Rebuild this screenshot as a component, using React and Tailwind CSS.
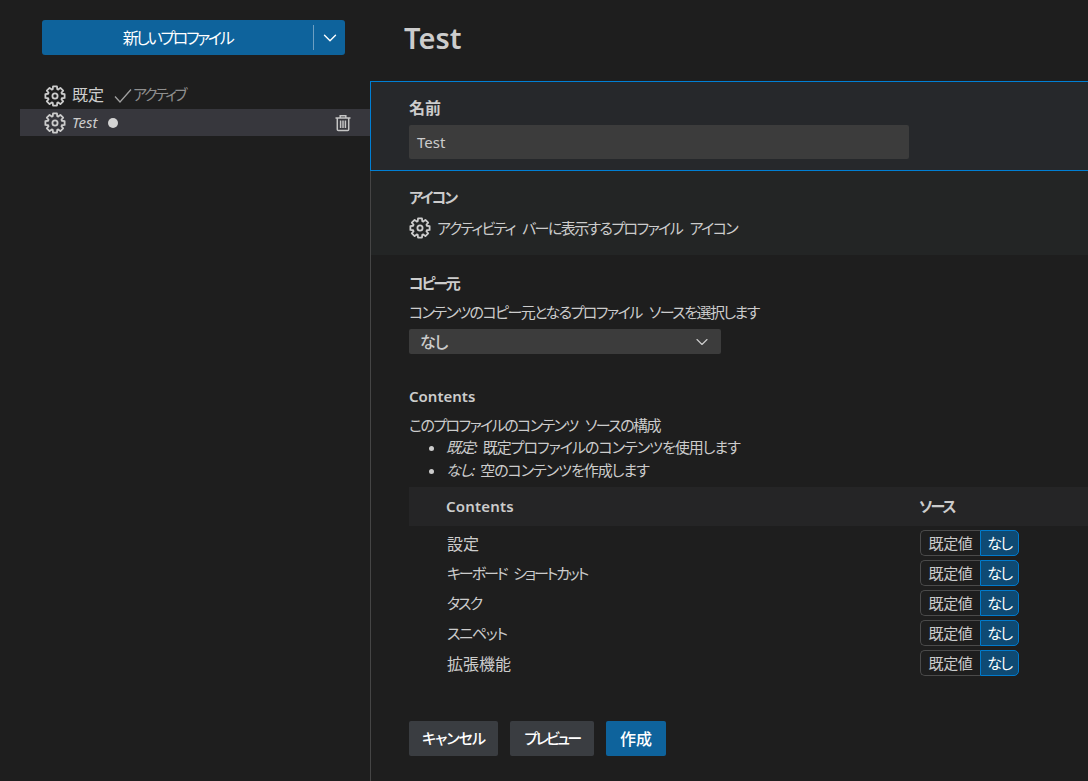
import { ChevronDown } from 'lucide-react';

const rows = [
  { label: '設定', cls: 'pt-[2px] text-[16px]' },
  { label: 'キーボード ショートカット', cls: 'pt-[1px] text-[15px] tracking-[-2.1px] [word-spacing:5px]' },
  { label: 'タスク', cls: 'pt-[1px] text-[15px] tracking-[-2px]' },
  { label: 'スニペット', cls: 'pt-[1px] text-[15px] tracking-[-1.2px]' },
  { label: '拡張機能', cls: 'pt-[2px] text-[16px]' },
];

// 8 toothed gear outline, same shape as the codicon one
const gearPath = (() => {
  const pts = [];
  for (let i = 0; i < 8; i++) {
    const a = (i * Math.PI) / 4 - Math.PI / 2;
    [[7.2, -0.32], [9.8, -0.2], [9.8, 0.2], [7.2, 0.32]].forEach(([r, d]) => {
      pts.push(`${(11 + r * Math.cos(a + d)).toFixed(2)} ${(11 + r * Math.sin(a + d)).toFixed(2)}`);
    });
  }
  return `M${pts.join('L')}Z`;
})();

function Gear({ className }) {
  return (
    <svg width="22" height="22" viewBox="0 0 22 22" fill="none" stroke="#cccccc" strokeWidth="1.8" strokeLinejoin="round" className={className}>
      <path d={gearPath} />
      <circle cx="11" cy="11" r="2.6" />
    </svg>
  );
}

function Trash() {
  return (
    <svg width="18" height="18" viewBox="0 0 18 18" fill="none" stroke="#c5c5c5" strokeWidth="1.5" className="mr-[18px]">
      <path d="M1.5 4h15M6.2 4V1.8h5.6V4" />
      <path d="M3.3 4v11.5c0 .6.5 1 1 1h9.4c.5 0 1-.4 1-1V4" />
      <path d="M6.6 6.5v7.5M9 6.5v7.5M11.4 6.5v7.5" />
    </svg>
  );
}

function Sidebar() {
  return (
    <div className="w-[370px] shrink-0 pl-5 pt-5">
      <div className="ml-[22px] flex h-[35px] w-[303px] items-center rounded-[3px] bg-[#0e639c] text-white">
        <div className="flex-1 text-center text-[16px] tracking-[-2.3px]">新しいプロファイル</div>
        <div className="h-[25px] w-px bg-[#6d9fc2]" />
        <div className="flex w-[31px] justify-center">
          <ChevronDown size={22} strokeWidth={1.5} />
        </div>
      </div>
      <div className="mt-[27px]">
        <div className="flex h-[27px] items-center pl-6 text-[#cccccc]">
          <Gear />
          <span className="ml-[6px] pb-[2px] text-[16px]">既定</span>
          <svg width="20" height="20" viewBox="0 0 20 20" fill="none" stroke="#a0a0a0" strokeWidth="1.3" className="ml-[9px]">
            <path d="M2 10.5 7 16 18 3.5" />
          </svg>
          <span className="pb-[2px] text-[15px] tracking-[-2.4px] text-[#8f8f8f]">アクティブ</span>
        </div>
        <div className="flex h-[27px] items-center bg-[#37373d] pl-6 text-[#cccccc]">
          <Gear />
          <span className="ml-[6px] text-[15px] italic">Test</span>
          <span className="ml-[11px] h-[10px] w-[10px] rounded-full bg-[#d4d4d4]" />
          <div className="ml-auto flex">
            <Trash />
          </div>
        </div>
      </div>
    </div>
  );
}

function SourceToggle() {
  return (
    <div className="flex h-[26px] w-[99px] text-[15px] leading-none">
      <div className="flex w-[60px] items-center justify-center rounded-l-[5px] border border-r-0 border-[#4a4a4a] tracking-[-0.3px] text-[#cccccc]">
        既定値
      </div>
      <div className="flex flex-1 items-center justify-center rounded-r-[5px] border border-[#007acc] bg-[#0f4a73] tracking-[-1.5px] text-white">
        なし
      </div>
    </div>
  );
}

export default function App() {
  return (
    <div
      className="flex h-[781px] w-[1088px] overflow-hidden bg-[#1e1e1e] text-[15px] text-[#cccccc] [font-feature-settings:'palt']"
      style={{ fontFamily: '"Noto Sans", "Noto Sans CJK JP", sans-serif' }}
    >
      <Sidebar />
      <div className="flex min-w-0 flex-1 flex-col">
        <div className="flex h-[81px] shrink-0 items-center pb-[5px] pl-[34px] text-[29px] font-semibold text-[#cccccc]">
          Test
        </div>
        <div className="flex-1 border-l border-[#454545]">
          <div className="-ml-px h-[90px] border border-r-0 border-[#007fd4] bg-[#26282b] pl-[38px] pt-[16px]">
            <div className="h-[21px] text-[16px] leading-[21px] font-semibold">名前</div>
            <div className="mt-[6px] flex h-[34px] w-[500px] items-center rounded-[2px] bg-[#3c3c3c] px-2">Test</div>
          </div>
          <div className="h-[84px] bg-[#232525] pl-[38px] pt-[16px]">
            <div className="h-[21px] leading-[21px] font-semibold tracking-[-2px]">アイコン</div>
            <div className="mt-[8px] flex h-[24px] items-center">
              <Gear />
              <span className="ml-[6px] tracking-[-1.6px] [word-spacing:5px]">アクティビティ バーに表示するプロファイル アイコン</span>
            </div>
          </div>
          <div className="pl-[38px] pt-[18px]">
            <div className="h-[21px] leading-[21px] font-semibold tracking-[-2.2px]">コピー元</div>
            <div className="mt-[8px] h-[21px] leading-[21px] tracking-[-1.55px] [word-spacing:5px]">コンテンツのコピー元となるプロファイル ソースを選択します</div>
            <div className="mt-[6px] flex h-[25px] w-[312px] items-center justify-between rounded-[2px] bg-[#3c3c3c] pl-[11px] pr-[9px]">
              <span className="text-[16px] font-medium tracking-[-1px]">なし</span>
              <ChevronDown size={20} strokeWidth={1.4} />
            </div>
            <div className="mt-[32px] h-[21px] leading-[21px] font-semibold">Contents</div>
            <div className="mt-[8px] h-[21px] leading-[21px] tracking-[-1.57px] [word-spacing:5px]">このプロファイルのコンテンツ ソースの構成</div>
            <ul className="h-[51px] list-disc pl-[37px] leading-[23px] tracking-[-1px] [word-spacing:3px]">
              <li><em>既定:</em> 既定プロファイルのコンテンツを使用します</li>
              <li><em>なし:</em> 空のコンテンツを作成します</li>
            </ul>
            <div className="flex h-[39px] items-center bg-[#252526] font-semibold">
              <div className="w-[510px] pl-[37px] tracking-[0.2px]">Contents</div>
              <div className="tracking-[-2px]">ソース</div>
            </div>
            <div className="pt-[2px]">
              {rows.map((r) => (
                <div key={r.label} className="flex h-[30px] items-center">
                  <div className={`w-[511px] pl-[38px] ${r.cls}`}>{r.label}</div>
                  <SourceToggle />
                </div>
              ))}
            </div>
            <div className="mt-[43px] flex gap-3 font-medium">
              <button className="h-[35px] w-[89px] rounded-[2px] bg-[#3a3d41] tracking-[-1px] text-white">キャンセル</button>
              <button className="h-[35px] w-[84px] rounded-[2px] bg-[#3a3d41] tracking-[-2.6px] text-white">プレビュー</button>
              <button className="h-[35px] w-[60px] rounded-[2px] bg-[#0e639c] text-[16px] text-white">作成</button>
            </div>
          </div>
        </div>
      </div>
    </div>
  );
}
